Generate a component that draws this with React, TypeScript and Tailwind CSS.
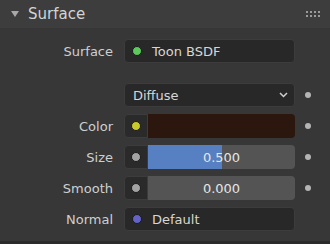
import React from "react";

const font = { fontFamily: '"DejaVu Sans", "Liberation Sans", sans-serif' };

function Socket({ color }: { color: string }) {
  return (
    <span
      className="block w-[10px] h-[10px] rounded-full border border-[#1a1a1a]"
      style={{ backgroundColor: color }}
    />
  );
}

function SideDot() {
  return (
    <div className="ml-[10px] flex items-center">
      <span className="block w-[6px] h-[6px] rounded-full bg-[#b4b4b4]" />
    </div>
  );
}

function Label({ text }: { text: string }) {
  return (
    <div className="w-[113px] mr-[11px] text-right text-[13px] text-[#cfcfcf] leading-none">{text}</div>
  );
}

function LinkField({ color, text }: { color: string; text: string }) {
  return (
    <div className="w-[171px] h-[24px] rounded-[4px] bg-[#282828] border border-[#3c3c3c] flex items-center pl-[7px]">
      <Socket color={color} />
      <span className="ml-[10px] text-[13px] text-[#d6d6d6] leading-none">{text}</span>
    </div>
  );
}

function ValueField({
  color,
  children,
}: {
  color: string;
  children: React.ReactNode;
}) {
  return (
    <div className="w-[171px] h-[24px] flex">
      <div className="w-[24px] h-full rounded-l-[4px] bg-[#2a2a2a] border border-[#3c3c3c] flex items-center justify-center">
        <Socket color={color} />
      </div>
      <div className="flex-1 h-full rounded-r-[4px] overflow-hidden relative">{children}</div>
    </div>
  );
}

export default function App() {
  return (
    <div className="w-[330px] h-[244px] bg-[#373737] flex flex-col" style={font}>
      <div className="h-[28px] bg-[#3d3d3d] flex items-center shrink-0">
        <svg width="8" height="6" viewBox="0 0 8 6" className="ml-[11px]">
          <polygon points="0,0 8,0 4,6" fill="#a8a8a8" />
        </svg>
        <span className="ml-[9px] text-[15px] text-[#d4d4d4] leading-none">Surface</span>
        <div className="ml-auto mr-[10px] grid grid-cols-4 gap-x-[2px] gap-y-[2px]">
          {Array.from({ length: 8 }).map((_, i) => (
            <span key={i} className="block w-[2px] h-[2px] bg-[#9a9a9a]" />
          ))}
        </div>
      </div>
      <div className="flex-1 flex flex-col pt-[11px]">
        <div className="flex items-center h-[24px]">
          <Label text="Surface" />
          <LinkField color="#5bc95b" text="Toon BSDF" />
        </div>
        <div className="flex items-center h-[24px] mt-[20px]">
          <div className="w-[124px]" />
          <div className="w-[171px] h-[24px] rounded-[4px] bg-[#282828] border border-[#3c3c3c] flex items-center pl-[8px] pr-[6px]">
            <span className="text-[13px] text-[#d6d6d6] leading-none">Diffuse</span>
            <svg width="9" height="6" viewBox="0 0 9 6" className="ml-auto">
              <polyline points="1,1 4.5,4.5 8,1" fill="none" stroke="#d0d0d0" strokeWidth="1.5" />
            </svg>
          </div>
          <SideDot />
        </div>
        <div className="flex items-center h-[24px] mt-[7px]">
          <Label text="Color" />
          <ValueField color="#c9c92a">
            <div className="w-full h-full bg-[#2b170d]" />
          </ValueField>
          <SideDot />
        </div>
        <div className="flex items-center h-[24px] mt-[7px]">
          <Label text="Size" />
          <ValueField color="#a3a3a3">
            <div className="w-full h-full bg-[#545454] flex">
              <div className="w-1/2 h-full bg-[#5680c2]" />
            </div>
            <div className="absolute inset-0 flex items-center justify-center text-[13px] text-[#e6e6e6] leading-none">
              0.500
            </div>
          </ValueField>
          <SideDot />
        </div>
        <div className="flex items-center h-[24px] mt-[7px]">
          <Label text="Smooth" />
          <ValueField color="#a3a3a3">
            <div className="w-full h-full bg-[#545454]" />
            <div className="absolute inset-0 flex items-center justify-center text-[13px] text-[#e6e6e6] leading-none">
              0.000
            </div>
          </ValueField>
          <SideDot />
        </div>
        <div className="flex items-center h-[24px] mt-[7px]">
          <Label text="Normal" />
          <LinkField color="#6363c7" text="Default" />
        </div>
      </div>
      <div className="h-[3px] bg-[#2b2b2b] shrink-0" />
    </div>
  );
}
